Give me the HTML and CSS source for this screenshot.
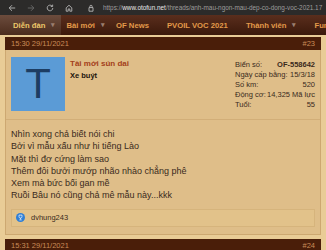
FILE: index.html
```html
<!DOCTYPE html>
<html lang="vi">

<head>
    <meta charset="UTF-8" />
    <meta name="viewport" content="width=device-width, initial-scale=1.0" />
    <title>otofun</title>
    <link rel="stylesheet" href="styles.css">
</head>

<body>
    <div class="chrome">
        <svg class="ico" viewBox="0 0 10 10"><path d="M9 5H1.5M5 1.5L1.5 5L5 8.5" /></svg>
        <svg class="ico dim" viewBox="0 0 10 10"><path d="M1 5h7.5M5 1.5L8.5 5L5 8.5" /></svg>
        <svg class="ico" viewBox="0 0 10 10"><path d="M8.5 5A3.5 3.5 0 1 1 7.4 2.4M8.3 0.8v2.4H5.9" /></svg>
        <svg class="ico" viewBox="0 0 10 10"><path d="M1.5 4.8L5 1.6l3.5 3.2V9H6V6.2H4V9H1.5z" /></svg>
        <svg class="ico lock" viewBox="0 0 10 10"><path d="M2.5 4.5h5V9h-5zM3.6 4.5V3a1.4 1.4 0 0 1 2.8 0v1.5" /></svg>
        <div class="url">https://<b>www.otofun.net</b>/threads/anh-mau-ngon-mau-dep-co-dong-voc-2021.17</div>
    </div>

    <nav class="nav">
        <a class="nav-item active">Diễn đàn <span class="caret">▾</span></a>
        <a class="nav-item">Bài mới <span class="caret">▾</span></a>
        <a class="nav-item">OF News</a>
        <a class="nav-item">PVOIL VOC 2021</a>
        <a class="nav-item">Thành viên <span class="caret">▾</span></a>
        <a class="nav-item">Funland</a>
    </nav>

    <div class="page">
        <article class="post">
            <div class="post-head">
                <span>15:30 29/11/2021</span>
                <span>#23</span>
            </div>
            <div class="post-user">
                <div class="avatar">T</div>
                <div class="user-name">
                    <div class="name">Tài mới sún dai</div>
                    <div class="title">Xe buýt</div>
                </div>
                <dl class="user-info">
                    <div class="row"><dt>Biển số:</dt><dd class="strong">OF-558642</dd></div>
                    <div class="row"><dt>Ngày cấp bằng:</dt><dd>15/3/18</dd></div>
                    <div class="row"><dt>Số km:</dt><dd>520</dd></div>
                    <div class="row"><dt>Động cơ:</dt><dd>14,325 Mã lực</dd></div>
                    <div class="row"><dt>Tuổi:</dt><dd>55</dd></div>
                </dl>
            </div>
            <div class="post-body">
                <p>Nhìn xong chả biết nói chi<br>
                    Bởi vì mẫu xấu như hi tiếng Lào<br>
                    Mặt thì đơ cứng làm sao<br>
                    Thêm đôi bưởi mướp nhão nhào chẳng phê<br>
                    Xem mà bức bối gan mề<br>
                    Ruồi Bâu nó cũng chả mê mẫu này...kkk</p>
                <div class="likes">
                    <svg class="like-ico" viewBox="0 0 12 12">
                        <circle cx="6" cy="6" r="6" fill="#2f7fd6" />
                        <path d="M4 2.8h4v2a2 2 0 0 1-4 0zM6 6.8v1.8M4.4 9.2h3.2" fill="none" stroke="#fff" stroke-width="0.9" />
                    </svg>
                    <span>dvhung243</span>
                </div>
            </div>
        </article>

        <article class="post">
            <div class="post-head">
                <span>15:31 29/11/2021</span>
                <span>#24</span>
            </div>
        </article>
    </div>
</body>

</html>
```

FILE: styles.css
```css
body {
    margin: 0;
    padding: 0;
    background-color: #e9cc96;
    font-family: "Liberation Sans", Arial, sans-serif;
    color: #3a2a1c;
    overflow: hidden;
}

.chrome {
    height: 15px;
    background: #2c2b2a;
    display: flex;
    align-items: center;
    padding-left: 8px;
    gap: 11px;
    overflow: hidden;
}

.ico {
    width: 8px;
    height: 8px;
    fill: none;
    stroke: #b9b9b9;
    stroke-width: 1.1;
    flex: none;
}

.ico.dim {
    stroke: #6b6b6b;
}

.ico.lock {
    margin-left: 3px;
}

.url {
    font-size: 6.4px;
    color: #9c9c9c;
    white-space: nowrap;
    margin-left: -3px;
}

.url b {
    color: #e8e8e8;
    font-weight: normal;
}

.nav {
    height: 20px;
    display: flex;
    align-items: stretch;
    background: linear-gradient(#5a2e1d, #3b190b);
    white-space: nowrap;
    overflow: hidden;
}

.nav-item {
    display: flex;
    align-items: center;
    flex: none;
    padding: 0 9px;
    font-size: 7.7px;
    font-weight: bold;
    color: #e39a4a;
}

.nav-item.active {
    color: #ecc86a;
    background: linear-gradient(#6c4c3d, #4b2c1d);
    padding: 0 6px 0 13px;
}

.nav-item:nth-child(2) {
    padding: 0 5px 0 5px;
}

.nav-item:nth-child(3) {
    padding-left: 6px;
}

.caret {
    color: #9b7f70;
    font-size: 7px;
    margin-left: 6px;
}

.page {
    padding: 2px 5px 0;
}

.post {
    background: #dfbe89;
    border: 1px solid #cda871;
    border-top: none;
    margin-bottom: 4px;
}

.post-head {
    height: 13px;
    background: #4a1e09;
    display: flex;
    justify-content: space-between;
    align-items: center;
    padding: 0 6px;
    margin: 0 -1px;
    font-size: 7.5px;
    color: #c98c57;
}

.post-user {
    display: flex;
    padding: 7px 5px 8px 5px;
    border-bottom: 1px solid #d2ae78;
}

.avatar {
    width: 54px;
    height: 54px;
    background: #5b9bd6;
    color: #1d3d63;
    font-size: 42px;
    line-height: 54px;
    text-align: center;
    flex: none;
}

.user-name {
    flex: 1;
    padding: 2px 0 0 5px;
    font-size: 7.5px;
    font-weight: bold;
}

.name {
    color: #a3401a;
    font-size: 8px;
    margin-bottom: 3px;
}

.title {
    color: #1c140c;
}

.user-info {
    width: 80px;
    margin: 3px 0 0;
    white-space: nowrap;
    font-size: 7.5px;
    line-height: 10px;
    color: #3a2a1c;
}

.user-info .row {
    display: flex;
    justify-content: space-between;
}

.user-info dt,
.user-info dd {
    margin: 0;
}

.user-info dd.strong {
    font-weight: bold;
}

.post-body {
    padding: 8px 5px 7px 5px;
}

.post-body p {
    margin: 0 0 7px;
    font-size: 9px;
    line-height: 12.3px;
}

.likes {
    display: flex;
    align-items: center;
    gap: 6px;
    height: 16px;
    padding-left: 4px;
    background: #e2c28a;
    border: 1px solid #d6b47c;
    font-size: 7.5px;
}

.like-ico {
    width: 9px;
    height: 9px;
}
```
